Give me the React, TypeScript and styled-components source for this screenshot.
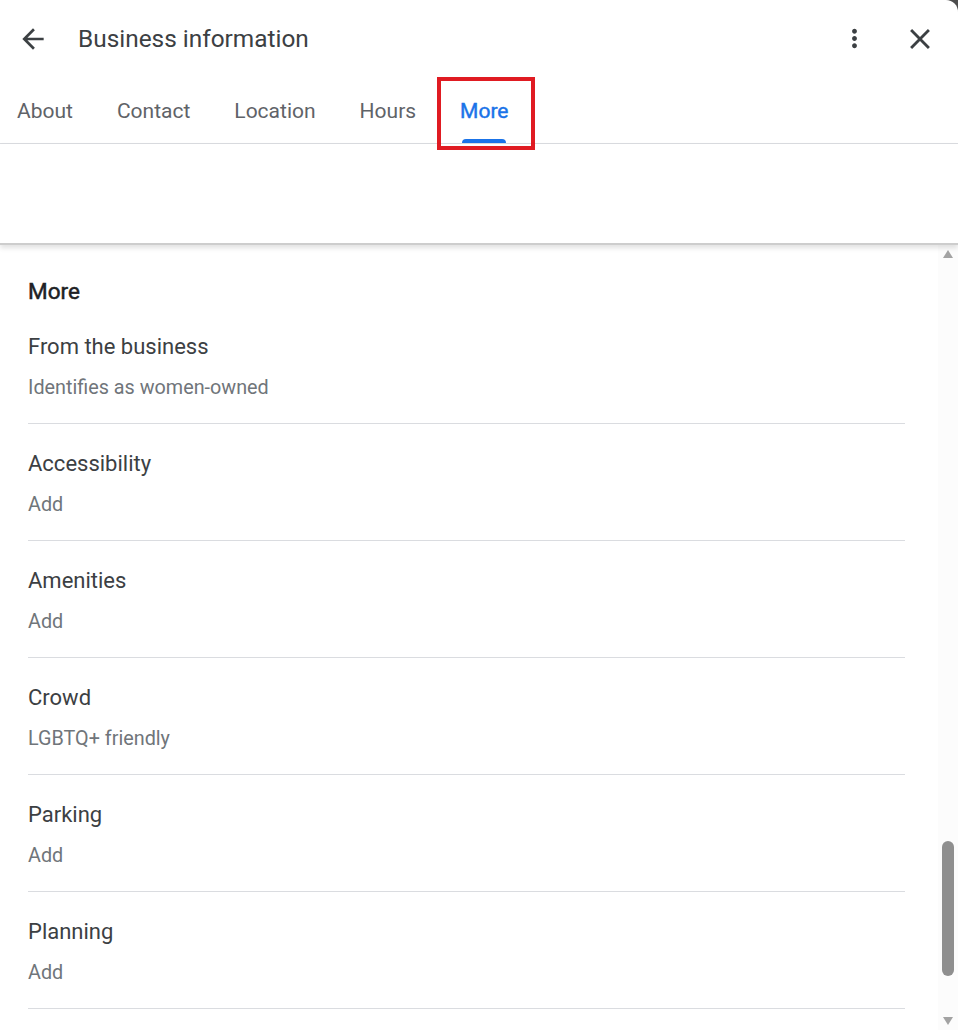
import styled, { createGlobalStyle } from 'styled-components';

const GlobalStyle = createGlobalStyle`
  html, body {
    margin: 0;
    padding: 0;
    background: #4d4d4d;
    overflow: hidden;
  }
  body {
    font-family: Roboto, "Liberation Sans", Arial, sans-serif;
  }
`;

const Dialog = styled.div`
  width: 958px;
  height: 1030px;
  background: #ffffff;
  border-top-right-radius: 12px;
  display: flex;
  flex-direction: column;
  overflow: hidden;
`;

const Header = styled.div`
  height: 77px;
  display: flex;
  align-items: center;
  padding: 0 21px 0 17px;
  flex-shrink: 0;
`;

const IconButton = styled.button<{ size: number }>`
  width: ${(p) => p.size}px;
  height: ${(p) => p.size}px;
  padding: 0;
  border: none;
  background: none;
  display: flex;
  align-items: center;
  justify-content: center;
  color: #3c4043;
  cursor: pointer;

  svg {
    width: 100%;
    height: 100%;
    fill: currentColor;
  }
`;

const Title = styled.h1`
  margin: 0 0 0 29px;
  flex: 1;
  font-size: 24.4px;
  font-weight: 400;
  color: #3c4043;
  line-height: 32px;
`;

const HeaderActions = styled.div`
  display: flex;
  align-items: center;
  gap: 34px;
`;

const Tabs = styled.div`
  height: 66px;
  display: flex;
  gap: 44px;
  padding-left: 17px;
  border-bottom: 1px solid #dadce0;
  flex-shrink: 0;
`;

/* medium weight imitated with a thin stroke, the installed Roboto jumps to bold */
const Tab = styled.div<{ active?: boolean }>`
  position: relative;
  display: flex;
  align-items: center;
  padding-top: 1px;
  font-size: 21px;
  font-weight: 400;
  -webkit-text-stroke: ${(p) => (p.active ? '0.45px' : '0')} currentColor;
  color: ${(p) => (p.active ? '#1a73e8' : '#5f6368')};
`;

const Indicator = styled.span`
  position: absolute;
  left: 2px;
  right: 2px;
  bottom: 0;
  height: 4px;
  border-radius: 4px 4px 0 0;
  background: #1a73e8;
`;

const Highlight = styled.span`
  position: absolute;
  left: -23px;
  right: -27px;
  top: 0;
  bottom: -7px;
  border: 4px solid #e01b22;
  pointer-events: none;
`;

const Spacer = styled.div`
  height: 99px;
  flex-shrink: 0;
  border-bottom: 2px solid #cdcdcd;
  box-shadow: 0 3px 5px rgba(0, 0, 0, 0.12);
  position: relative;
  z-index: 1;
`;

const Body = styled.div`
  flex: 1;
  display: flex;
  min-height: 0;
`;

const Content = styled.div`
  flex: 1;
  padding: 32px 33px 0 28px;
  overflow: hidden;
`;

const SectionHeading = styled.h2`
  margin: 0 0 2px;
  font-size: 22.5px;
  font-weight: 400;
  -webkit-text-stroke: 0.5px currentColor;
  line-height: 28px;
  color: #202124;
`;

const Item = styled.div`
  padding: 26px 0 22px;
  border-bottom: 1px solid #dadce0;
`;

const ItemTitle = styled.div`
  font-size: 22px;
  line-height: 28px;
  color: #3c4043;
`;

const ItemValue = styled.div`
  margin-top: 14px;
  font-size: 19.8px;
  line-height: 26px;
  color: #70757a;
`;

const Scrollbar = styled.div`
  width: 20px;
  flex-shrink: 0;
  background: #fcfcfc;
  display: flex;
  flex-direction: column;
  align-items: center;
`;

const Arrow = styled.div<{ down?: boolean }>`
  height: 18px;
  width: 20px;
  display: flex;
  align-items: center;
  justify-content: center;

  &::before {
    content: '';
    width: 0;
    height: 0;
    border-left: 5.5px solid transparent;
    border-right: 5.5px solid transparent;
    ${(p) =>
      p.down
        ? 'border-top: 8px solid #a3a3a3;'
        : 'border-bottom: 8px solid #a3a3a3;'}
  }
`;

const Track = styled.div`
  flex: 1;
  width: 100%;
  display: flex;
  justify-content: center;
`;

const Thumb = styled.div<{ offset: number; length: number }>`
  margin-top: ${(p) => p.offset}px;
  width: 12px;
  height: ${(p) => p.length}px;
  border-radius: 6px;
  background: #8f8f8f;
`;

const tabs = ['About', 'Contact', 'Location', 'Hours', 'More'];

const items = [
  { title: 'From the business', value: 'Identifies as women-owned' },
  { title: 'Accessibility', value: 'Add' },
  { title: 'Amenities', value: 'Add' },
  { title: 'Crowd', value: 'LGBTQ+ friendly' },
  { title: 'Parking', value: 'Add' },
  { title: 'Planning', value: 'Add' },
];

export default function App() {
  return (
    <>
      <GlobalStyle />
      <Dialog>
        <Header>
          <IconButton size={32} aria-label="Back">
            <svg viewBox="0 0 24 24">
              <path d="M20 11H7.83l5.59-5.59L12 4l-8 8 8 8 1.41-1.41L7.83 13H20v-2z" />
            </svg>
          </IconButton>
          <Title>Business information</Title>
          <HeaderActions>
            <IconButton size={29} aria-label="More options">
              <svg viewBox="0 0 24 24">
                <path d="M12 8c1.1 0 2-.9 2-2s-.9-2-2-2-2 .9-2 2 .9 2 2 2zm0 2c-1.1 0-2 .9-2 2s.9 2 2 2 2-.9 2-2-.9-2-2-2zm0 6c-1.1 0-2 .9-2 2s.9 2 2 2 2-.9 2-2-.9-2-2-2z" />
              </svg>
            </IconButton>
            <IconButton size={34} aria-label="Close">
              <svg viewBox="0 0 24 24">
                <path d="M19 6.41L17.59 5 12 10.59 6.41 5 5 6.41 10.59 12 5 17.59 6.41 19 12 13.41 17.59 19 19 17.59 13.41 12z" />
              </svg>
            </IconButton>
          </HeaderActions>
        </Header>
        <Tabs>
          {tabs.map((t) => (
            <Tab key={t} active={t === 'More'}>
              {t}
              {t === 'More' && (
                <>
                  <Indicator />
                  <Highlight />
                </>
              )}
            </Tab>
          ))}
        </Tabs>
        <Spacer />
        <Body>
          <Content>
            <SectionHeading>More</SectionHeading>
            {items.map((it) => (
              <Item key={it.title}>
                <ItemTitle>{it.title}</ItemTitle>
                <ItemValue>{it.value}</ItemValue>
              </Item>
            ))}
          </Content>
          <Scrollbar>
            <Arrow />
            <Track>
              <Thumb offset={578} length={135} />
            </Track>
            <Arrow down />
          </Scrollbar>
        </Body>
      </Dialog>
    </>
  );
}
